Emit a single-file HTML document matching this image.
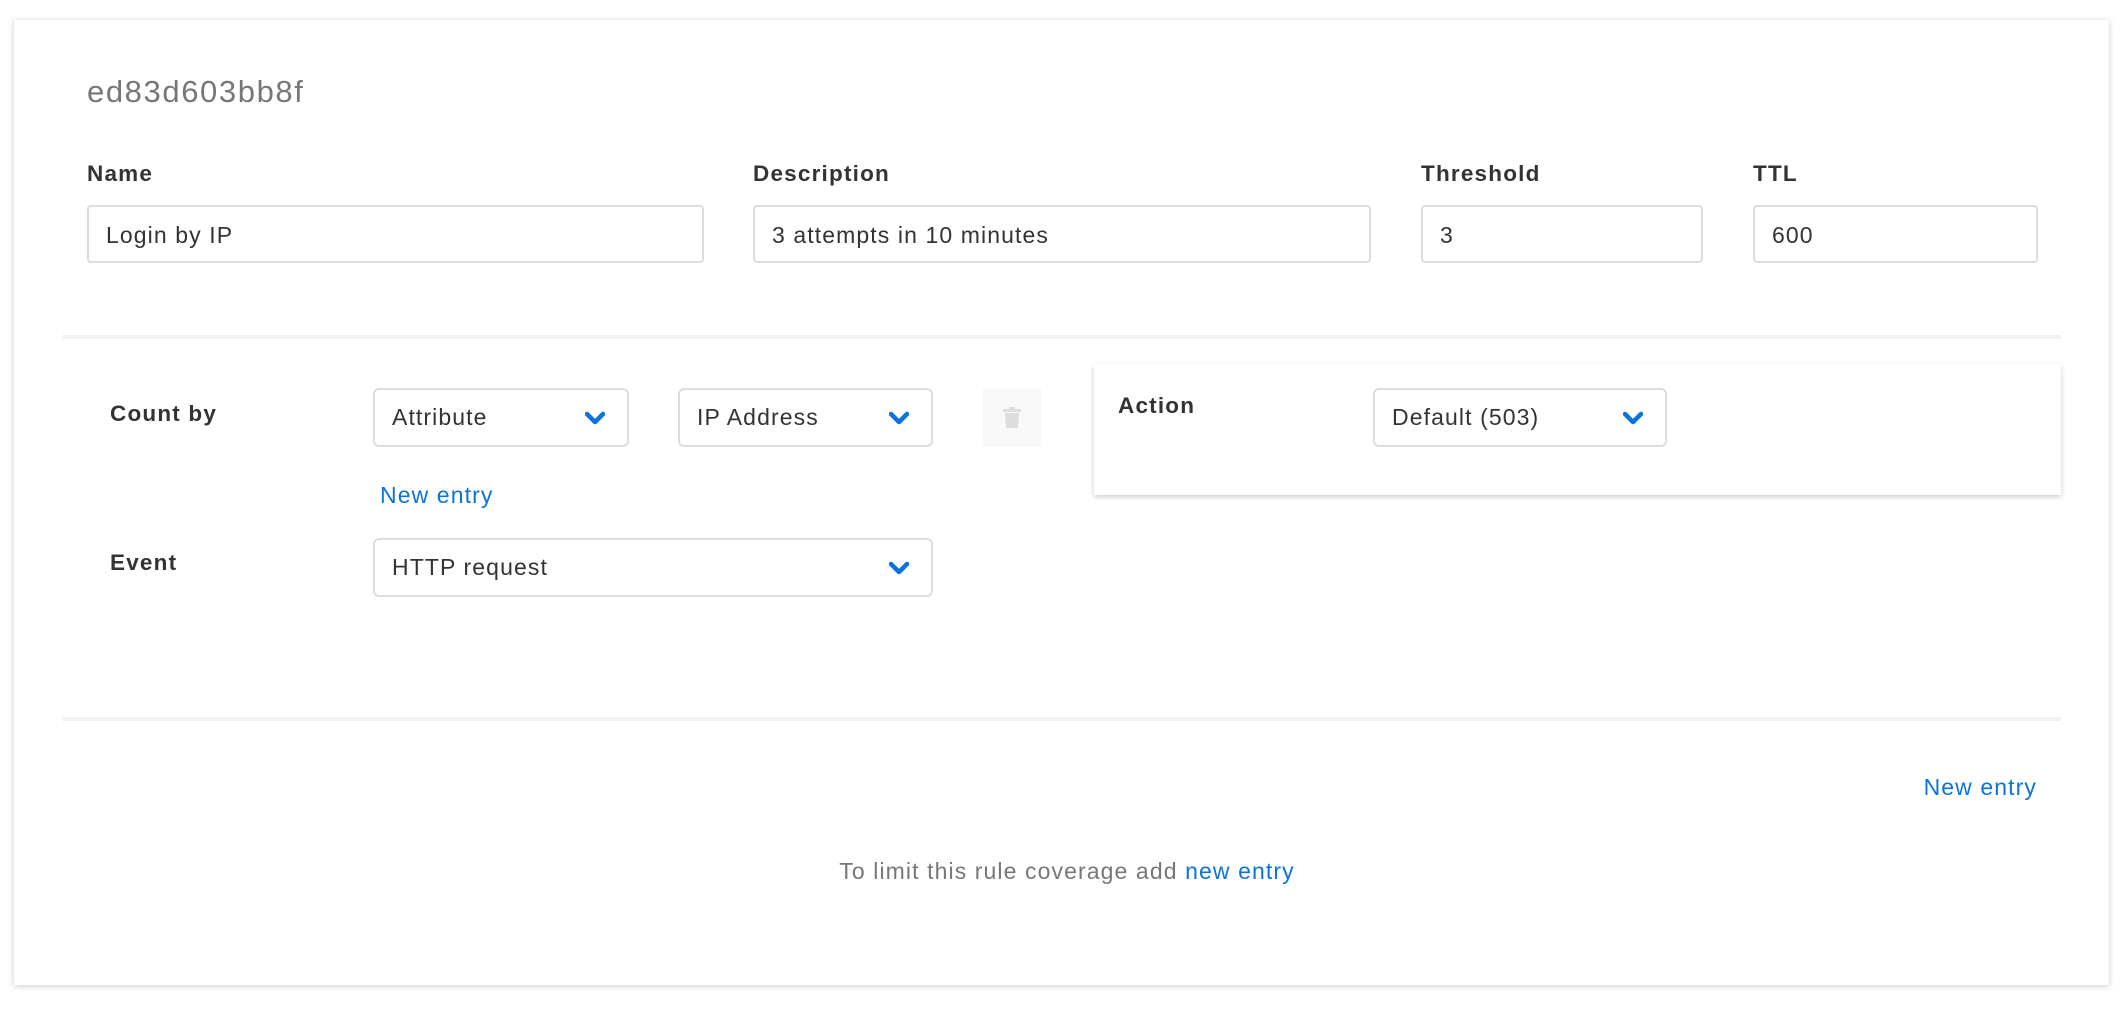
<!DOCTYPE html>
<html><head><meta charset="utf-8"><style>
*{box-sizing:border-box;margin:0;padding:0}
body{width:2128px;height:1010px;background:#fff;font-family:"Liberation Sans",Helvetica,Arial,sans-serif;position:relative;overflow:hidden;letter-spacing:1.1px}
.card{position:absolute;left:14px;top:20px;width:2095px;height:965px;background:#fff;box-shadow:0 1px 6px rgba(0,0,0,.22)}
.a{position:absolute}
.title{left:87px;top:74px;font-size:31px;color:#777;line-height:36px;letter-spacing:1.6px}
.lbl{font-size:22.5px;font-weight:bold;color:#333;line-height:26px;letter-spacing:1.2px}
.inp{position:absolute;height:58px;border:2px solid #ddd;border-radius:4px;font-size:23px;color:#333;padding-left:17px;line-height:56px;background:#fff}
.sel{position:absolute;height:59px;border:2px solid #ddd;border-radius:6px;font-size:23px;color:#333;padding-left:17px;line-height:55px;background:#fff}
.sel svg{position:absolute;right:22px;top:21px}
.hr{position:absolute;left:62px;width:1999px;height:4px;background:#f2f2f2}
.link{color:#0b74dc;font-size:23px}
.trash{left:982px;top:389px;width:60px;height:58px;background:#f8f8f8;border-radius:3px}
.panel{left:1094px;top:364px;width:967px;height:131px;background:#fff;box-shadow:0 2px 5px rgba(0,0,0,.2)}
</style></head><body>
<div class="card"></div>
<div class="a title">ed83d603bb8f</div>
<div class="a lbl" style="left:87px;top:161px">Name</div>
<div class="a lbl" style="left:753px;top:161px">Description</div>
<div class="a lbl" style="left:1421px;top:161px">Threshold</div>
<div class="a lbl" style="left:1753px;top:161px">TTL</div>
<div class="inp" style="left:87px;top:205px;width:617px">Login by IP</div>
<div class="inp" style="left:753px;top:205px;width:618px">3 attempts in 10 minutes</div>
<div class="inp" style="left:1421px;top:205px;width:282px">3</div>
<div class="inp" style="left:1753px;top:205px;width:285px">600</div>
<div class="hr" style="top:335px"></div>

<div class="a lbl" style="left:110px;top:401px">Count by</div>
<div class="sel" style="left:373px;top:388px;width:256px">Attribute<svg width="20" height="14" viewBox="0 0 20 14"><path d="M2 3 L10 11 L18 3" fill="none" stroke="#0b74dc" stroke-width="4.5" stroke-linecap="round" stroke-linejoin="round"/></svg></div>
<div class="sel" style="left:678px;top:388px;width:255px">IP Address<svg width="20" height="14" viewBox="0 0 20 14"><path d="M2 3 L10 11 L18 3" fill="none" stroke="#0b74dc" stroke-width="4.5" stroke-linecap="round" stroke-linejoin="round"/></svg></div>
<div class="a trash"><svg width="60" height="58" viewBox="0 0 60 58"><rect x="21" y="20" width="18" height="3" rx="1" fill="#ddd"/><rect x="27" y="18" width="6" height="3" fill="#ddd"/><path d="M23 24 H37 L36 39 H24 Z" fill="#ddd"/></svg></div>
<div class="a panel"></div>
<div class="a lbl" style="left:1118px;top:393px">Action</div>
<div class="sel" style="left:1373px;top:388px;width:294px">Default (503)<svg width="20" height="14" viewBox="0 0 20 14"><path d="M2 3 L10 11 L18 3" fill="none" stroke="#0b74dc" stroke-width="4.5" stroke-linecap="round" stroke-linejoin="round"/></svg></div>
<div class="a link" style="left:380px;top:482px">New entry</div>
<div class="a lbl" style="left:110px;top:550px">Event</div>
<div class="sel" style="left:373px;top:538px;width:560px">HTTP request<svg width="20" height="14" viewBox="0 0 20 14"><path d="M2 3 L10 11 L18 3" fill="none" stroke="#0b74dc" stroke-width="4.5" stroke-linecap="round" stroke-linejoin="round"/></svg></div>
<div class="hr" style="top:717px"></div>
<div class="a link" style="right:91px;top:774px">New entry</div>
<div class="a" style="left:0;width:2128px;text-align:center;top:858px;font-size:23px;color:#777;padding-left:6px">To limit this rule coverage add <span class="link">new entry</span></div>
</body></html>
